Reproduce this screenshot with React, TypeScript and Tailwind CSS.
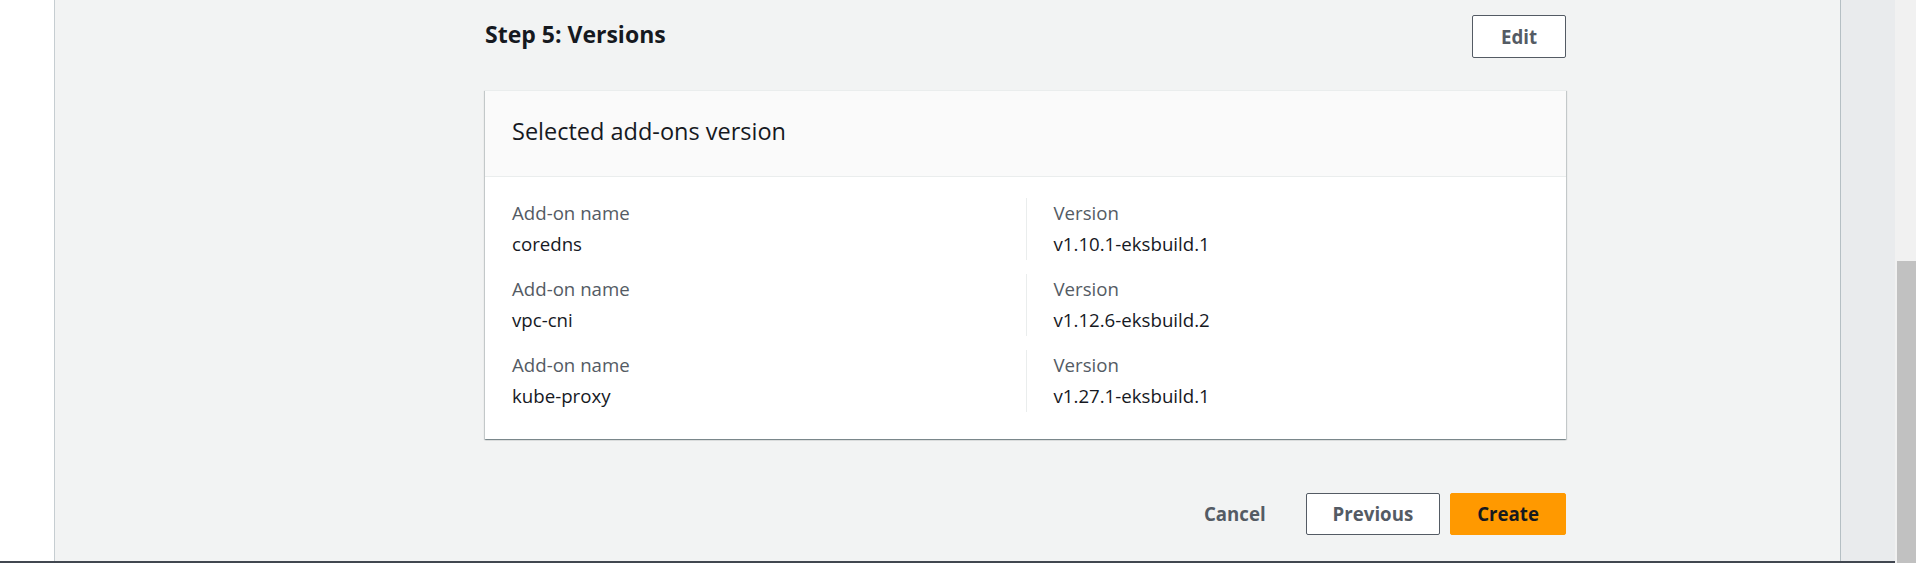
import React from 'react';

interface AddOn {
  name: string;
  version: string;
}

const addOns: AddOn[] = [
  { name: 'coredns', version: 'v1.10.1-eksbuild.1' },
  { name: 'vpc-cni', version: 'v1.12.6-eksbuild.2' },
  { name: 'kube-proxy', version: 'v1.27.1-eksbuild.1' },
];

const App: React.FC = () => {
  return (
    <div className="flex h-[563px] w-full overflow-hidden font-['Open_Sans',sans-serif] text-[#16191f]">
      <div className="flex flex-1 flex-col">
        <div className="flex flex-1">
          {/* left nav rail */}
          <div className="w-[55px] shrink-0 border-r border-[#c6cdd1] bg-white" />

          {/* main content */}
          <div className="flex-1 bg-[#f2f3f3]">
            <div className="ml-[430px] w-[1081px] pt-[15px]">
              <div className="flex h-[43px] items-center justify-between">
                <h2 className="mb-[5px] text-[23px] font-bold leading-[30px]">Step 5: Versions</h2>
                <button className="h-[43px] rounded-[2px] border border-[#545b64] bg-white px-[28px] text-[18.67px] font-bold text-[#545b64]">
                  Edit
                </button>
              </div>

              <div className="mt-[32px] border-t border-[#eaeded] bg-white shadow-[0_1px_1px_0_rgba(0,28,36,0.3),1px_1px_1px_0_rgba(0,28,36,0.15),-1px_1px_1px_0_rgba(0,28,36,0.15)]">
                <div className="flex h-[86px] items-center border-b border-[#eaeded] bg-[#fafafa] px-[27px] pb-[6px]">
                  <h3 className="text-[23.5px] font-normal leading-[30px]">Selected add-ons version</h3>
                </div>
                <div className="flex flex-col gap-[14px] px-[27px] pb-[27px] pt-[21px]">
                  {addOns.map((a) => (
                    <div key={a.name} className="grid h-[62px] grid-cols-2 text-[18.67px] leading-[26.67px]">
                      <div className="pt-[2px]">
                        <div className="text-[#545b64]">Add-on name</div>
                        <div className="mt-[4px]">{a.name}</div>
                      </div>
                      <div className="border-l border-[#eaeded] pl-[27px] pt-[2px]">
                        <div className="text-[#545b64]">Version</div>
                        <div className="mt-[4px]">{a.version}</div>
                      </div>
                    </div>
                  ))}
                </div>
              </div>

              <div className="mt-[54px] flex items-center justify-end">
                <button className="mr-[13px] h-[42px] px-[27px] text-[18.67px] font-bold text-[#545b64]">
                  Cancel
                </button>
                <button className="h-[42px] rounded-[2px] border border-[#545b64] bg-white px-[26px] text-[18.67px] font-bold text-[#545b64]">
                  Previous
                </button>
                <button className="ml-[10px] h-[42px] rounded-[2px] border border-[#ff9900] bg-[#ff9900] px-[26px] text-[18.67px] font-bold text-[#16191f]">
                  Create
                </button>
              </div>
            </div>
          </div>

          {/* right tools rail */}
          <div className="w-[55px] shrink-0 border-l border-[#b5bfc4] bg-[#e9ebed]" />
        </div>
        <div className="h-[2px] bg-[#414750]" />
      </div>

      {/* scrollbar */}
      <div className="flex w-[21px] shrink-0 flex-col bg-[#f1f1f1] pl-[2px]">
        <div className="h-[261px]" />
        <div className="flex-1 bg-[#c1c1c1]" />
      </div>
    </div>
  );
};

export default App;
